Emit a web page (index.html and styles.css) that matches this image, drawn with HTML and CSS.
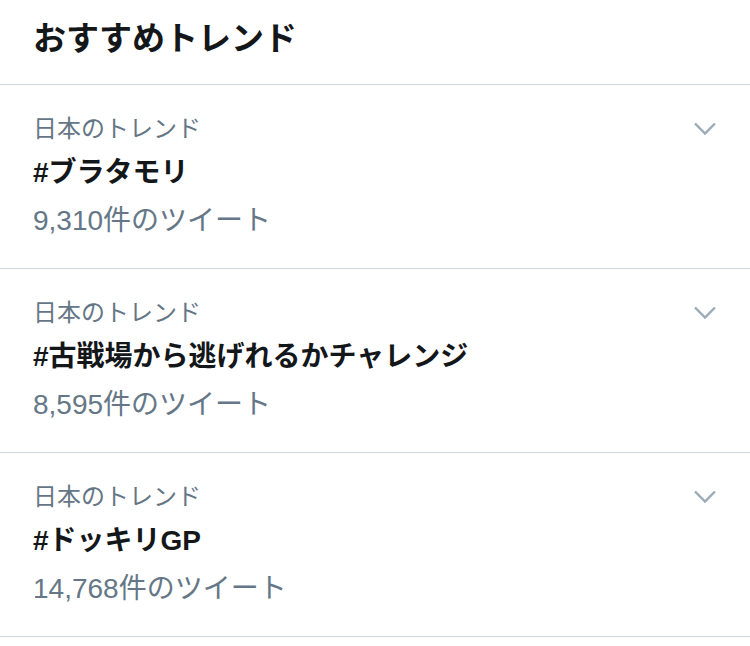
FILE: index.html
```html
<!DOCTYPE html>
<html lang="ja">
<head>
    <meta charset="UTF-8">
    <meta name="viewport" content="width=device-width, initial-scale=1.0">
    <title>おすすめトレンド</title>
    <link rel="stylesheet" href="styles.css">
</head>
<body>
    <div class="trends">
        <div class="th">
            <h2>おすすめトレンド</h2>
        </div>

        <!-- Trend items -->
        <div class="ti">
            <div class="tc">
                <div class="tl">日本のトレンド</div>
                <div class="tn">#ブラタモリ</div>
                <div class="tt">9,310件のツイート</div>
            </div>
            <svg class="chev" width="22" height="14" viewBox="0 0 22 14"><path d="M1 1.5 L11 11.5 L21 1.5"/></svg>
        </div>

        <div class="ti">
            <div class="tc">
                <div class="tl">日本のトレンド</div>
                <div class="tn">#古戦場から逃げれるかチャレンジ</div>
                <div class="tt">8,595件のツイート</div>
            </div>
            <svg class="chev" width="22" height="14" viewBox="0 0 22 14"><path d="M1 1.5 L11 11.5 L21 1.5"/></svg>
        </div>

        <div class="ti">
            <div class="tc">
                <div class="tl">日本のトレンド</div>
                <div class="tn">#ドッキリGP</div>
                <div class="tt">14,768件のツイート</div>
            </div>
            <svg class="chev" width="22" height="14" viewBox="0 0 22 14"><path d="M1 1.5 L11 11.5 L21 1.5"/></svg>
        </div>
    </div>
</body>
</html>
```

FILE: styles.css
```css
body {
    margin: 0;
    padding: 0;
    background-color: #fff;
    font-family: "Liberation Sans", "Noto Sans CJK JP", sans-serif;
    color: #14171a;
}
.trends {
    width: 750px;
}
.th {
    height: 85px;
    box-sizing: border-box;
    padding: 0 33px 7px;
    display: flex;
    align-items: center;
    border-bottom: 1px solid #ccd6dd;
}
.th h2 {
    margin: 0;
    font-size: 33px;
    font-weight: 700;
    line-height: 40px;
}
.ti {
    height: 184px;
    box-sizing: border-box;
    padding: 24px 34px 0 33px;
    display: flex;
    justify-content: space-between;
    align-items: flex-start;
    border-bottom: 1px solid #ccd6dd;
}
.tl {
    font-size: 24px;
    line-height: 40px;
    color: #657786;
}
.tn {
    font-size: 28px;
    font-weight: 700;
    line-height: 48px;
}
.tt {
    font-size: 28px;
    line-height: 48px;
    color: #657786;
}
.chev {
    margin-top: 13px;
    fill: none;
    stroke: #9aabb8;
    stroke-width: 2.4;
}
```
